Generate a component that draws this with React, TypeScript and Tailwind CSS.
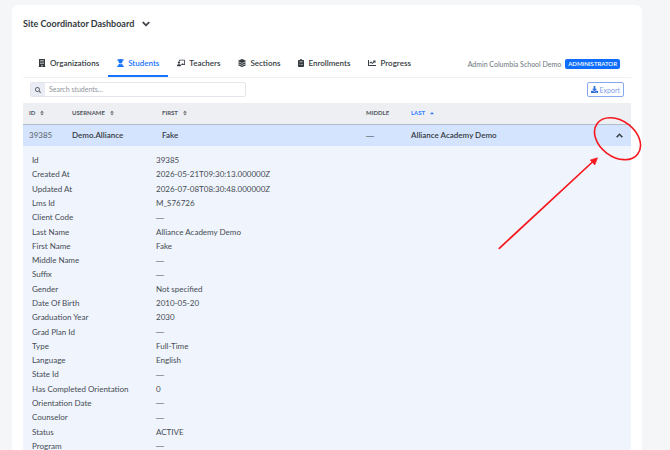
import * as React from 'react'
import {
  FaBuilding,
  FaCaretUp,
  FaChalkboardTeacher,
  FaChartLine,
  FaChevronDown,
  FaChevronUp,
  FaDownload,
  FaLayerGroup,
  FaSearch,
  FaSort,
} from 'react-icons/fa'

function StudentIcon({ className }: { className?: string }) {
  return (
    <svg viewBox="0 0 14 16" fill="currentColor" className={className} aria-hidden="true">
      <path d="M0.5 1.2 L7 0 L13.5 1.2 V3 L11 3.6 V5 A4 4 0 0 1 3 5 V3.6 L0.5 3 Z" />
      <path d="M3 10 L5 9.4 L7 11 L9 9.4 L11 10 L10.6 12.4 Q14 13 14 16 H0 Q0 13 3.4 12.4 Z" />
    </svg>
  )
}

function EnrollmentIcon({ className }: { className?: string }) {
  return (
    <svg viewBox="0 0 12 16" fill="currentColor" className={className} aria-hidden="true">
      <path
        fillRule="evenodd"
        d="M1.5 2 H3.6 A2.5 2.5 0 0 1 8.4 2 H10.5 Q12 2 12 3.5 V14.5 Q12 16 10.5 16 H1.5 Q0 16 0 14.5 V3.5 Q0 2 1.5 2 Z M3 4 H9 V4.8 H3 Z M2.6 7.4 H3.6 V8.4 H2.6 Z M5 7.4 H9.5 V8.2 H5 Z M2.6 11 H3.6 V12 H2.6 Z M5 11 H9.5 V11.8 H5 Z"
      />
    </svg>
  )
}

const tabs = [
  { label: 'Organizations', icon: FaBuilding },
  { label: 'Students', icon: StudentIcon, active: true },
  { label: 'Teachers', icon: FaChalkboardTeacher },
  { label: 'Sections', icon: FaLayerGroup },
  { label: 'Enrollments', icon: EnrollmentIcon },
  { label: 'Progress', icon: FaChartLine },
]

const details = [
  ['Id', '39385'],
  ['Created At', '2026-05-21T09:30:13.000000Z'],
  ['Updated At', '2026-07-08T08:30:48.000000Z'],
  ['Lms Id', 'M_S76726'],
  ['Client Code', ''],
  ['Last Name', 'Alliance Academy Demo'],
  ['First Name', 'Fake'],
  ['Middle Name', ''],
  ['Suffix', ''],
  ['Gender', 'Not specified'],
  ['Date Of Birth', '2010-05-20'],
  ['Graduation Year', '2030'],
  ['Grad Plan Id', ''],
  ['Type', 'Full-Time'],
  ['Language', 'English'],
  ['State Id', ''],
  ['Has Completed Orientation', '0'],
  ['Orientation Date', ''],
  ['Counselor', ''],
  ['Status', 'ACTIVE'],
  ['Program', ''],
]

function Empty() {
  return <span className="font-['Liberation_Sans',sans-serif]">—</span>
}

function SortHeader({ label }: { label: string }) {
  return (
    <button type="button" className="flex items-center gap-1 font-bold">
      {label}
      <FaSort className="h-[6px] w-auto opacity-80" />
    </button>
  )
}

function Tabs() {
  return (
    <nav className="-ml-px flex">
      {tabs.map(({ label, icon: Icon, active }) => (
        <a
          key={label}
          href="#"
          className={
            active
              ? 'flex h-[27px] items-center gap-1 border-b-2 border-[#1673ff] px-[9px] font-semibold text-[#1673ff]'
              : 'flex h-[27px] items-center gap-1 border-b-2 border-transparent px-[9px] font-semibold text-[#343a40]'
          }
        >
          <Icon className="h-2 w-auto" />
          {label}
        </a>
      ))}
    </nav>
  )
}

function StudentDetails() {
  return (
    <dl className="grid h-[300px] auto-rows-fr">
      {details.map(([label, value]) => (
        <div key={label} className="flex items-center">
          <dt className="w-[124px]">{label}</dt>
          <dd>{value || <Empty />}</dd>
        </div>
      ))}
    </dl>
  )
}

// Hand-drawn pointer to the row toggle
function Callout() {
  return (
    <svg
      className="pointer-events-none absolute top-[100px] right-0 size-[150px]"
      viewBox="492 105 150 150"
      fill="none"
      stroke="#f5171d"
      aria-hidden="true"
    >
      <ellipse cx="617.5" cy="138.7" rx="25.4" ry="18" strokeWidth="1.6" transform="rotate(37 617.5 138.7)" />
      <path d="M499.3 248.3 L593 161.5" strokeWidth="1.7" strokeLinecap="round" />
      <path d="M597.5 157.8 L594.8 165 L590.2 160 Z" fill="#f5171d" strokeWidth="0.6" />
    </svg>
  )
}

export default function App() {
  return (
    <main className="h-screen overflow-hidden bg-[#f5f6f8] pt-[5px] pr-7 pl-3 font-['Lato','Noto_Sans',sans-serif] text-[8px] leading-[12px] text-[#454c54]">
      <section className="relative min-h-screen rounded-md bg-white px-[11px] pt-3">
        <h1 className="text-[9px] leading-[14px] font-bold text-[#343a40]">
          <button type="button" className="flex items-center gap-2">
            Site Coordinator Dashboard
            <FaChevronDown className="size-2 stroke-current [stroke-width:40]" />
          </button>
        </h1>

        <div className="mt-[19px] flex items-end justify-between border-b border-[#f0f1f3] px-[7px]">
          <Tabs />
          <div className="mr-1 flex h-[27px] items-center gap-1 text-[7px] text-[#6c757d]">
            <span>Admin Columbia School Demo</span>
            <span className="rounded-[2px] bg-[#0d6efd] px-[3px] text-[6px] leading-[10px] font-semibold text-white">
              ADMINISTRATOR
            </span>
          </div>
        </div>

        <div className="flex items-center justify-between px-[7px] pt-1 pb-[6px]">
          <div className="flex h-[15px] w-[216px] rounded-[2px] border border-[#e4e6ec]">
            <label
              htmlFor="search"
              aria-label="Search students"
              className="flex w-[14px] items-center justify-center bg-[#e9ecf5] text-[#5b626a]"
            >
              <FaSearch className="size-[6px]" />
            </label>
            <input
              id="search"
              type="text"
              aria-label="Search students"
              placeholder="Search students..."
              className="h-[13px] min-w-0 flex-1 px-1 text-[7px] leading-[13px] outline-none placeholder:text-[#8f959c]"
            />
          </div>
          <button
            type="button"
            className="flex h-[15px] items-center gap-[2px] rounded-[2px] border border-[#86a8ee] px-[3px] text-[7px] text-[#7d9bea]"
          >
            <FaDownload className="size-[7px] text-[#2f6fe0]" />
            Export
          </button>
        </div>

        <table className="w-full table-fixed text-left">
          <colgroup>
            <col className="w-[43px]" />
            <col className="w-[90px]" />
            <col />
            <col className="w-[45px]" />
            <col className="w-[202px]" />
            <col className="w-6" />
          </colgroup>
          <thead>
            <tr className="h-[21px] border-b border-[#b3bccb] bg-[#eeeff2] text-[6px] leading-[10px] text-[#50565d]">
              <th className="pl-[6px]"><SortHeader label="ID" /></th>
              <th className="pl-[6px]"><SortHeader label="USERNAME" /></th>
              <th className="pl-[6px]"><SortHeader label="FIRST" /></th>
              <th className="pl-[6px] font-bold">MIDDLE</th>
              <th className="pl-[6px]">
                <button type="button" className="flex items-center gap-1 font-bold text-[#2f7bff]">
                  LAST
                  <FaCaretUp className="size-[6px]" />
                </button>
              </th>
              <th />
            </tr>
          </thead>
          <tbody>
            <tr className="h-[22px] bg-[#d5e4fe] font-semibold text-[#343a40]">
              <td className="pl-[6px] text-[#6c757d]">39385</td>
              <td className="pl-[6px]">Demo.Alliance</td>
              <td className="pl-[6px]">Fake</td>
              <td className="pl-[6px] font-normal"><Empty /></td>
              <td className="pl-[6px]">Alliance Academy Demo</td>
              <td>
                <button type="button" aria-label="Collapse row" className="mx-auto block">
                  <FaChevronUp className="size-[7px] stroke-current [stroke-width:40]" />
                </button>
              </td>
            </tr>
            <tr className="bg-[#f0f4fc]">
              <td colSpan={6} className="px-[9px] pt-[7px] pb-3">
                <StudentDetails />
              </td>
            </tr>
          </tbody>
        </table>

        <Callout />
      </section>
    </main>
  )
}
